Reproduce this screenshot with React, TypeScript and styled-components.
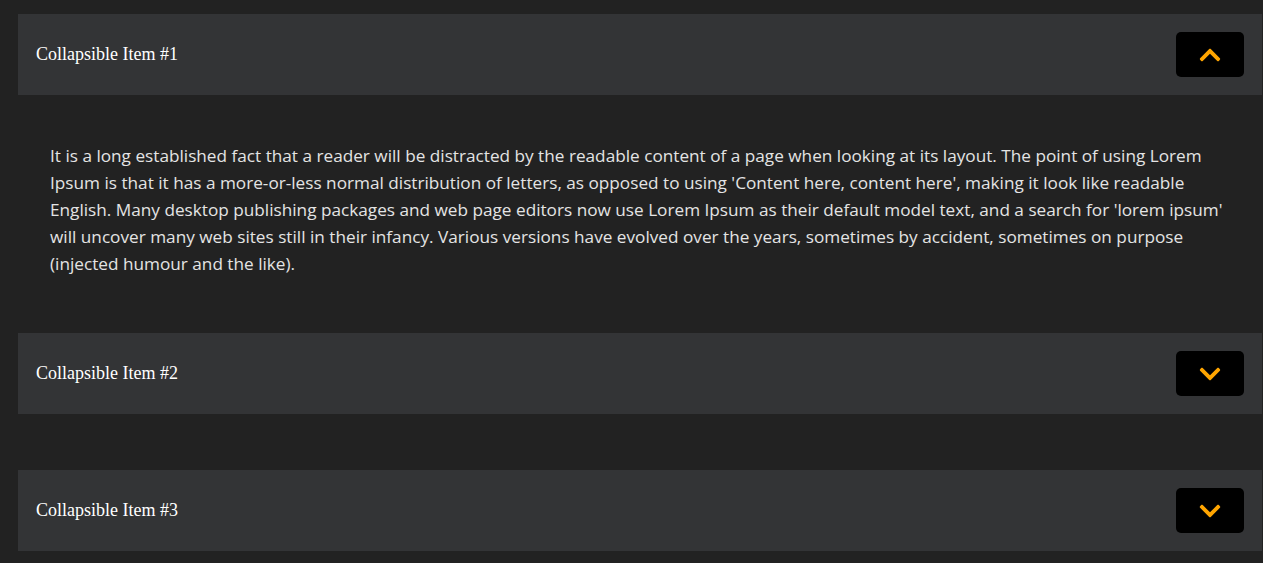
import React, { useState } from 'react'
import styled, { createGlobalStyle } from 'styled-components'
import { FaChevronUp, FaChevronDown } from 'react-icons/fa'

const GlobalStyle = createGlobalStyle`
  html, body {
    margin: 0;
    padding: 0;
    background: #222222;
  }
`

const Page = styled.div`
  padding: 14px 1px 0 18px;
  min-height: 563px;
  box-sizing: border-box;
`

const Item = styled.div`
  margin-bottom: 56px;
`

const Header = styled.div`
  display: flex;
  align-items: center;
  justify-content: space-between;
  height: 81px;
  padding: 0 18px;
  box-sizing: border-box;
  background: #333436;
`

const Title = styled.div`
  font-family: 'Liberation Serif', 'Times New Roman', serif;
  font-size: 18px;
  color: #ffffff;
`

const Toggle = styled.button`
  display: flex;
  align-items: center;
  justify-content: center;
  width: 68px;
  height: 45px;
  border: none;
  border-radius: 5px;
  background: #000000;
  color: #ffa500;
  cursor: pointer;
  padding: 0;
`

const Body = styled.div`
  padding: 47px 32px 0 32px;
  font-family: 'Open Sans', Lato, sans-serif;
  font-size: 17.2px;
  line-height: 27px;
  color: #e4e4e4;
`

const text =
  "It is a long established fact that a reader will be distracted by the readable content of a page when looking at its layout. The point of using Lorem Ipsum is that it has a more-or-less normal distribution of letters, as opposed to using 'Content here, content here', making it look like readable English. Many desktop publishing packages and web page editors now use Lorem Ipsum as their default model text, and a search for 'lorem ipsum' will uncover many web sites still in their infancy. Various versions have evolved over the years, sometimes by accident, sometimes on purpose (injected humour and the like)."

const items = ['Collapsible Item #1', 'Collapsible Item #2', 'Collapsible Item #3']

const App = () => {
  const [open, setOpen] = useState<number | null>(0)

  return (
    <>
      <GlobalStyle />
      <Page>
        {items.map((title, i) => (
          <Item key={title}>
            <Header>
              <Title>{title}</Title>
              <Toggle onClick={() => setOpen(open === i ? null : i)}>
                {open === i ? <FaChevronUp size={24} /> : <FaChevronDown size={24} />}
              </Toggle>
            </Header>
            {open === i && <Body>{text}</Body>}
          </Item>
        ))}
      </Page>
    </>
  )
}

export default App
